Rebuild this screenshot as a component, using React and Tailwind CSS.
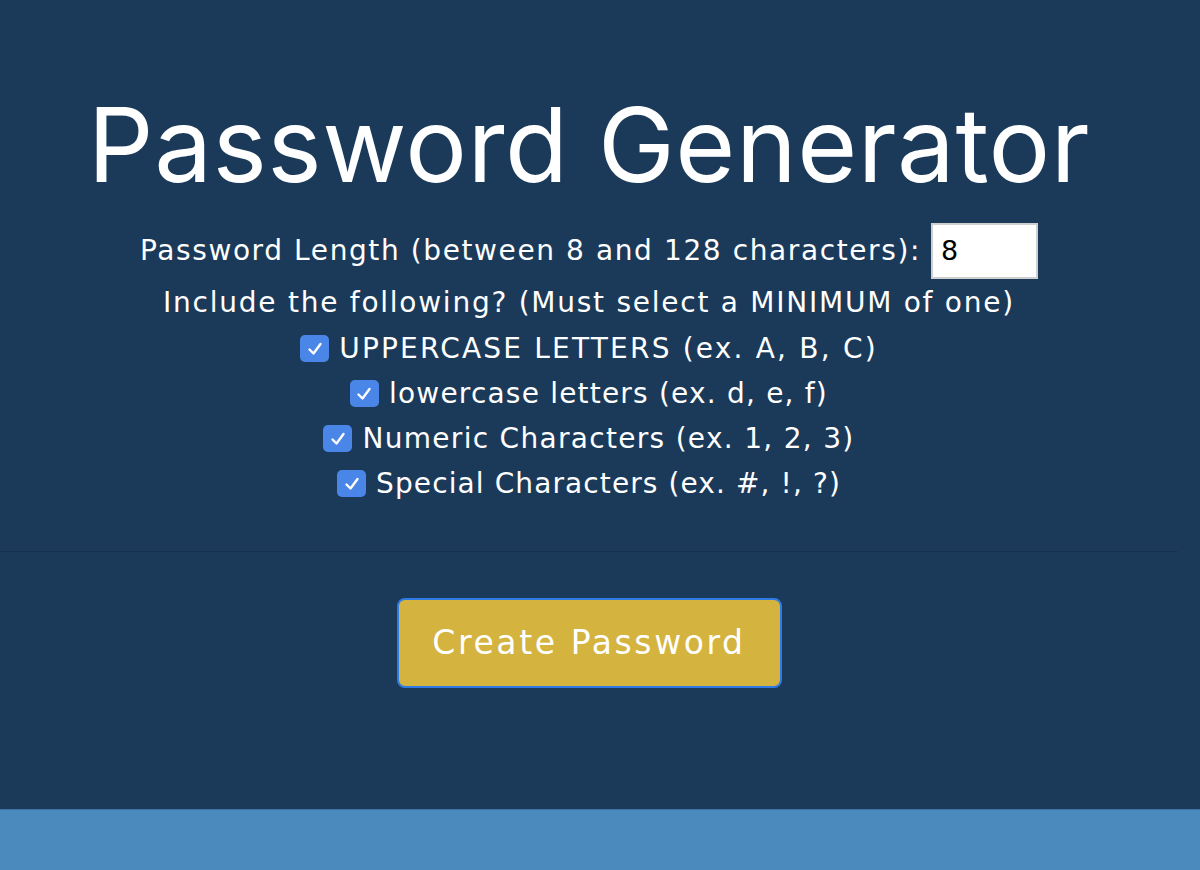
import React from "react";

function Check({ label, track }) {
  return (
    <label className="flex items-center justify-center gap-[10px] h-[45px]">
      <span className="w-[29px] h-[27px] rounded-[5px] bg-[#4a86e8] flex items-center justify-center">
        <svg width="18" height="16" viewBox="0 0 18 16" fill="none">
          <path d="M3.5 8.5 L7.5 12.5 L14.5 3" stroke="white" strokeWidth="2.4" strokeLinecap="round" strokeLinejoin="round" />
        </svg>
      </span>
      <span className={track}>{label}</span>
    </label>
  );
}

export default function App() {
  return (
    <div className="w-[1200px] h-[870px] bg-[#1b3a5a] text-white flex flex-col" style={{ fontFamily: "'DejaVu Sans', sans-serif" }}>
      <div className="w-[1178px] h-[552px] border-b border-[#16324f] flex flex-col items-center">
        <h1 className="mt-[80px] text-[103px] leading-[130px] font-normal tracking-[0.5px]" style={{ fontFamily: "Inter, sans-serif" }}>Password Generator</h1>
        <div className="mt-[12px] text-[28px] flex flex-col items-center">
          <div className="flex items-center gap-[10px] h-[58px]">
            <span className="tracking-[1.6px]">Password Length (between 8 and 128 characters):</span>
            <span className="w-[107px] h-[56px] bg-white border-2 border-[#cfcfcf] text-black text-[27px] flex items-center pl-[8px]">8</span>
          </div>
          <div className="h-[46px] flex items-center tracking-[1.75px]">Include the following? (Must select a MINIMUM of one)</div>
          <Check label="UPPERCASE LETTERS (ex. A, B, C)" track="tracking-[2.2px]" />
          <Check label="lowercase letters (ex. d, e, f)" track="tracking-[1.2px]" />
          <Check label="Numeric Characters (ex. 1, 2, 3)" track="tracking-[1.3px]" />
          <Check label="Special Characters (ex. #, !, ?)" track="tracking-[1.1px]" />
        </div>
      </div>
      <div className="w-[1178px] flex-1 flex justify-center pt-[46px]">
        <button className="w-[385px] h-[90px] bg-[#d4b33e] border-2 border-[#2f7ae5] rounded-[8px] text-white text-[33px] tracking-[2.6px]">Create Password</button>
      </div>
      <div className="h-[61px] bg-[#4a8abd] border-t border-[#3c72a2]"></div>
    </div>
  );
}
